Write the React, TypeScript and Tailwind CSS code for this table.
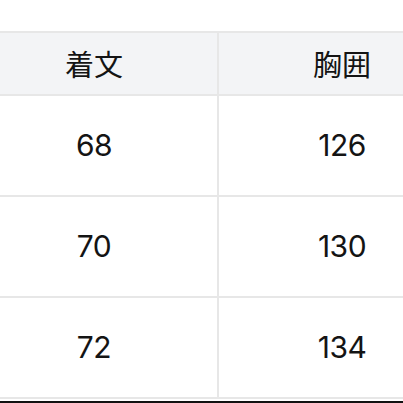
import React from 'react';

const rows = [
  ['68', '126'],
  ['70', '130'],
  ['72', '134'],
];

export default function App() {
  return (
    <div className="w-[403px] h-[403px] overflow-hidden bg-white pt-[31px] font-['Inter','Noto_Sans_CJK_JP',sans-serif] text-[#141414]">
      <div className="-ml-[31px] w-[744px] border-t-2 border-l-2 border-[#e7e7e7]">
        <div className="flex h-[63px] bg-[#f3f4f6]">
          {['着文', '胸囲', ''].map((h, i) => (
            <div
              key={i}
              className="w-[248px] shrink-0 flex items-center justify-center border-r-2 border-b-2 border-[#e7e7e7] text-[29px] font-['Noto_Sans_CJK_JP',sans-serif]"
            >
              {h}
            </div>
          ))}
        </div>
        {rows.map((r) => (
          <div key={r[0]} className="flex h-[101px]">
            {[...r, ''].map((c, i) => (
              <div
                key={i}
                className="w-[248px] shrink-0 flex items-center justify-center border-r-2 border-b-2 border-[#e7e7e7] text-[30px] tracking-[-0.5px]"
              >
                {c}
              </div>
            ))}
          </div>
        ))}
      </div>
      <div className="mt-[2px] h-[2px] bg-[#111]" />
    </div>
  );
}
